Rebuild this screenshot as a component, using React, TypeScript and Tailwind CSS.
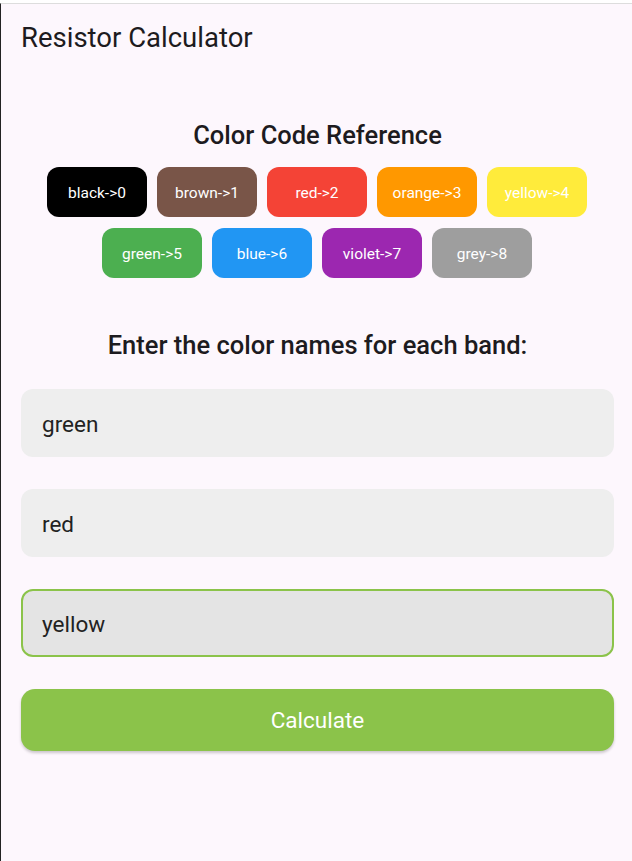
const chips = [
  { label: "black->0", bg: "bg-[#000000]" },
  { label: "brown->1", bg: "bg-[#795548]" },
  { label: "red->2", bg: "bg-[#f44336]" },
  { label: "orange->3", bg: "bg-[#ff9800]" },
  { label: "yellow->4", bg: "bg-[#ffeb3b]" },
  { label: "green->5", bg: "bg-[#4caf50]" },
  { label: "blue->6", bg: "bg-[#2196f3]" },
  { label: "violet->7", bg: "bg-[#9c27b0]" },
  { label: "grey->8", bg: "bg-[#9e9e9e]" },
];

function Chip({ label, bg }: { label: string; bg: string }) {
  return (
    <div
      className={`flex h-[50px] w-[100px] items-center justify-center rounded-[12px] pt-[3px] text-[15.5px] text-white ${bg}`}
    >
      {label}
    </div>
  );
}

function Field({ value, focused = false }: { value: string; focused?: boolean }) {
  return (
    <div
      className={`flex h-[68px] items-center rounded-[12px] pt-[4px] text-[22.5px] text-[#222] ${
        focused ? "border-2 border-[#8bc34a] bg-[#e4e4e4] px-[19px]" : "bg-[#eeeeee] px-[21px]"
      }`}
    >
      {value}
    </div>
  );
}

export default function App() {
  return (
    <div className="h-[861px] w-[632px] bg-white pt-[3px] font-['Roboto',sans-serif]">
      <div className="h-[858px] border-l border-t border-l-[#222] border-t-[#dddddd] bg-[#fdf7fd]">
        <header className="flex h-[70px] items-center pl-[20px] pb-[2px] text-[27.5px] text-[#1d1b20]">
          Resistor Calculator
        </header>
        <div className="flex flex-col pl-[20px] pr-[18px]">
          <h2 className="mt-[44px] text-center text-[25.5px] font-medium leading-[34px] text-[#1d1b20]">
            Color Code Reference
          </h2>
          <div className="ml-[26px] mt-[15px] flex w-[540px] flex-wrap justify-center gap-x-[10px] gap-y-[11px]">
            {chips.map((c) => (
              <Chip key={c.label} label={c.label} bg={c.bg} />
            ))}
          </div>
          <h3 className="mt-[50px] text-center text-[25.5px] font-medium leading-[34px] text-[#1d1b20]">
            Enter the color names for each band:
          </h3>
          <div className="mt-[27px] flex flex-col gap-[32px]">
            <Field value="green" />
            <Field value="red" />
            <Field value="yellow" focused />
          </div>
          <button className="mt-[32px] h-[62px] rounded-[14px] bg-[#8bc34a] pt-[2px] text-[22.5px] text-white shadow-[0_2px_3px_rgba(0,0,0,0.2)]">
            Calculate
          </button>
        </div>
      </div>
    </div>
  );
}
